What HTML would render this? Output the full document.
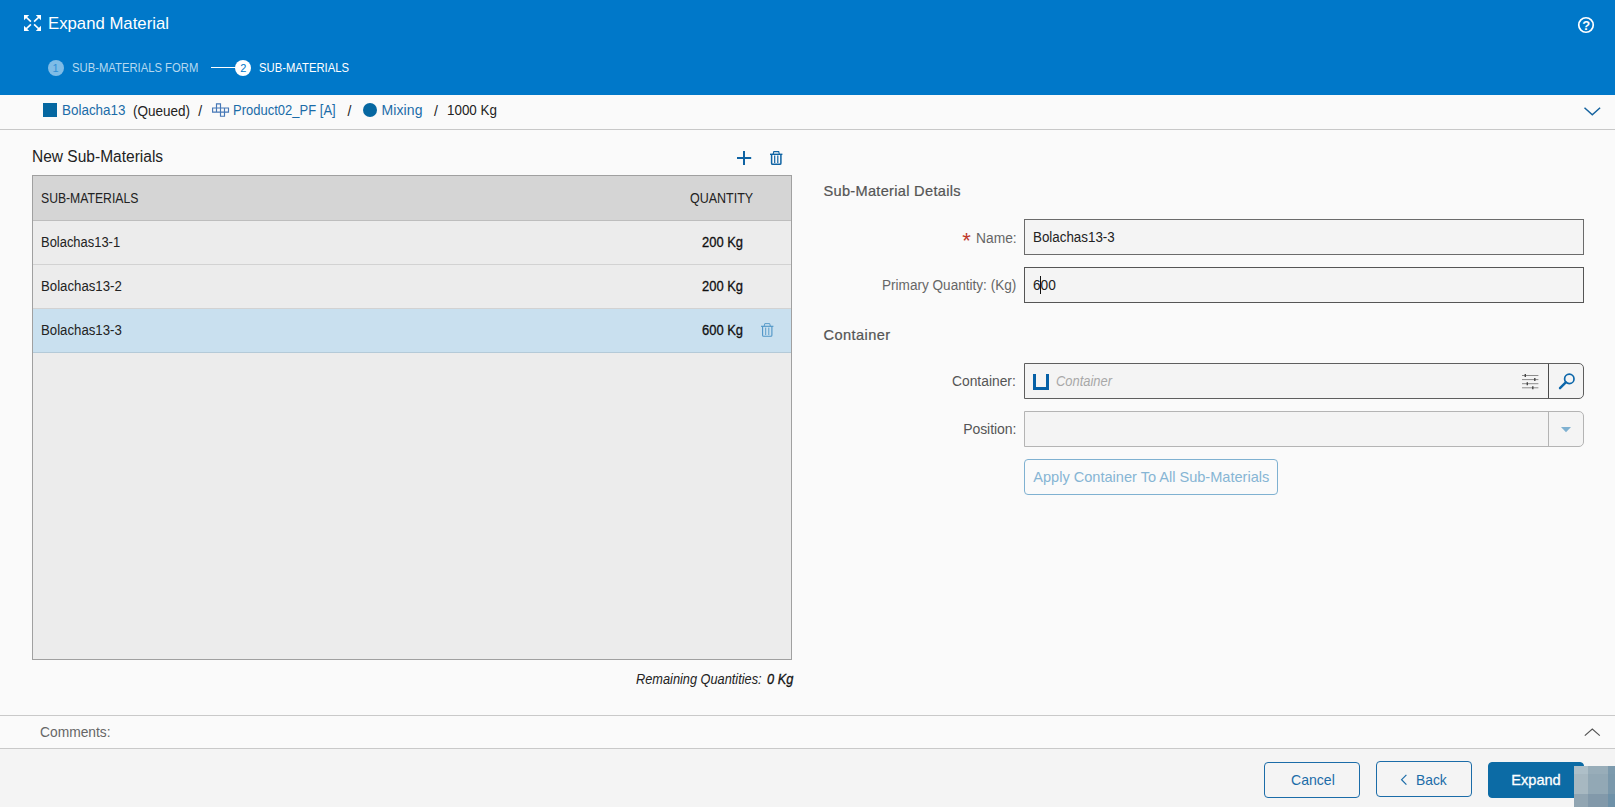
<!DOCTYPE html>
<html lang="en">
<head>
<meta charset="utf-8">
<title>Expand Material</title>
<style>
html,body{margin:0;padding:0;}
body{width:1615px;height:807px;overflow:hidden;position:relative;background:#fafafa;font-family:"Liberation Sans",sans-serif;}
.t{position:absolute;transform-origin:0 0;line-height:20px;white-space:nowrap;margin:0;padding:0;font-weight:400;}
.abs,svg{position:absolute;}
svg{overflow:visible;}
.hdr{position:absolute;left:0;top:0;width:1615px;height:95px;background:#0078c9;}
.crumb{position:absolute;left:0;top:95px;width:1615px;height:34px;background:#fafafa;border-bottom:1px solid #c8c8c8;}
.stepc{position:absolute;width:16px;height:16px;border-radius:50%;top:60px;}
.grid{position:absolute;left:32px;top:175px;width:758px;height:483px;border:1px solid #a0a0a0;background:#ececec;}
.gh{position:absolute;left:0;top:0;width:758px;height:44px;background:#d5d5d5;border-bottom:1px solid #bdbdbd;}
.gr{position:absolute;left:0;width:758px;height:43px;border-bottom:1px solid #d2d2d2;}
.gr.sel{background:#c9e0ef;border-bottom-color:#b4cad8;}
.inp{position:absolute;left:1024px;width:558px;height:34px;border:1px solid #6b6b6b;background:#f4f4f4;}
.btn{position:absolute;box-sizing:border-box;border:1px solid #1b6ca8;border-radius:4px;background:#f4f4f4;}
.foot{position:absolute;left:0;top:749px;width:1615px;height:58px;background:#f4f4f4;}
.ln{position:absolute;left:0;width:1615px;height:1px;background:#c9c9c9;}
.px{position:absolute;}
</style>
</head>
<body>
<header class="hdr">
<svg style="left:24px;top:15px" width="17" height="16" viewBox="0 0 17 16"><path d="M0 0H5.2L0 5.2ZM17 0H11.8L17 5.2ZM0 16H5.2L0 10.8ZM17 16H11.8L17 10.8Z" fill="#fff"/><path d="M1.5 1.5L6.9 6.7M15.5 1.5L10.1 6.7M1.5 14.5L6.9 9.3M15.5 14.5L10.1 9.3" stroke="#fff" stroke-width="1.7" fill="none"/></svg>
<h1 class="t" style="left:47.84px;top:14.00px;font-size:17px;color:#fff;transform:scaleX(0.9847);">Expand Material</h1>
<div class="stepc" style="left:48px;background:#7fbce6"></div>
<span class="t" style="left:52.61px;top:58.00px;font-size:11px;color:#2f8fd6;">1</span>
<span class="t" style="left:71.62px;top:58.00px;font-size:12.8px;color:#b5d8f0;transform:scaleX(0.8807);">SUB-MATERIALS FORM</span>
<div class="abs" style="left:211px;top:67px;width:25px;height:1px;background:#fff"></div>
<div class="stepc" style="left:235px;background:#fff"></div>
<span class="t" style="left:240.32px;top:58.00px;font-size:11px;color:#0078c8;">2</span>
<span class="t" style="left:259.23px;top:58.00px;font-size:12.8px;color:#fff;transform:scaleX(0.8807);">SUB-MATERIALS</span>
<svg style="left:1577.2px;top:16.1px" width="18" height="18" viewBox="0 0 18 18" fill="none" stroke="#fff" stroke-width="1.7"><circle cx="9" cy="9" r="7.25"/></svg>
<span class="t" style="left:1582.14px;top:16.00px;font-size:13px;color:#fff;font-weight:700;">?</span>
</header>
<nav class="crumb"></nav>
<div class="abs" style="left:43px;top:103px;width:14px;height:14px;background:#0567a1"></div>
<span class="t" style="left:62.14px;top:100.00px;font-size:14px;color:#1b6ca8;transform:scaleX(0.9599);">Bolacha13</span>
<span class="t" style="left:132.94px;top:101.00px;font-size:14px;color:#222;transform:scaleX(0.9647);">(Queued)</span>
<span class="t" style="left:198.27px;top:101.00px;font-size:14px;color:#222;">/</span>
<svg style="left:212px;top:103px" width="17" height="14" viewBox="0 0 17 14" fill="none" stroke="#4577b6" stroke-width="1.15"><path d="M0.6 5H16.5V9.1H0.6ZM4.5 9.1V0.9H8.5V13.2H12.5V5"/></svg>
<span class="t" style="left:232.97px;top:100.00px;font-size:14px;color:#1b6ca8;transform:scaleX(0.9291);">Product02_PF [A]</span>
<span class="t" style="left:347.42px;top:101.00px;font-size:14px;color:#222;">/</span>
<div class="abs" style="left:363px;top:103px;width:14px;height:14px;border-radius:50%;background:#0567a1"></div>
<span class="t" style="left:381.53px;top:100.00px;font-size:14px;color:#1b6ca8;letter-spacing:0.096px;">Mixing</span>
<span class="t" style="left:434.11px;top:101.00px;font-size:14px;color:#222;">/</span>
<span class="t" style="left:446.98px;top:100.00px;font-size:14px;color:#222;transform:scaleX(0.9575);">1000 Kg</span>
<svg style="left:1584px;top:107px" width="17" height="9" viewBox="0 0 17 9" fill="none" stroke="#15639f" stroke-width="1.5"><path d="M0.5 0.7L8.3 7.7L16.1 0.7"/></svg>

<h2 class="t" style="left:32.10px;top:147.00px;font-size:16px;color:#222;transform:scaleX(0.9701);">New Sub-Materials</h2>
<svg style="left:737px;top:151px" width="14" height="14" viewBox="0 0 14 14" fill="none" stroke="#0f63a3" stroke-width="2"><path d="M7 0V14M0 7H14.2"/></svg>
<svg style="left:770px;top:151px" width="13" height="14" viewBox="0 0 13 14" fill="none" stroke="#0f63a3"><path d="M0 3.3H12.4" stroke-width="1.4"/><path d="M3.1 3.3L3.8 0.6H8.7L9.4 3.3" stroke-width="1.1"/><path d="M1.6 3.3V12.2Q1.6 13.3 2.7 13.3H9.8Q10.9 13.3 10.9 12.2V3.3" stroke-width="1.5"/><path d="M4.7 4.6V12M7.8 4.6V12" stroke-width="1.2"/></svg>
<div class="grid">
<div class="gh"></div>
<div class="gr" style="top:45px"></div>
<div class="gr" style="top:89px"></div>
<div class="gr sel" style="top:133px"></div>
</div>
<span class="t" style="left:40.97px;top:188.00px;font-size:14px;color:#222;transform:scaleX(0.8707);">SUB-MATERIALS</span>
<span class="t" style="left:689.88px;top:188.00px;font-size:14px;color:#222;transform:scaleX(0.8930);">QUANTITY</span>
<span class="t" style="left:40.55px;top:232.00px;font-size:14px;color:#222;transform:scaleX(0.9237);">Bolachas13-1</span>
<span class="t" style="left:701.97px;top:232.00px;font-size:14px;color:#111;transform:scaleX(0.9239);-webkit-text-stroke:0.3px #111;">200 Kg</span>
<span class="t" style="left:40.67px;top:276.00px;font-size:14px;color:#222;transform:scaleX(0.9438);">Bolachas13-2</span>
<span class="t" style="left:701.97px;top:276.00px;font-size:14px;color:#111;transform:scaleX(0.9239);-webkit-text-stroke:0.3px #111;">200 Kg</span>
<span class="t" style="left:40.64px;top:320.00px;font-size:14px;color:#222;transform:scaleX(0.9434);">Bolachas13-3</span>
<span class="t" style="left:702.39px;top:320.00px;font-size:14px;color:#111;transform:scaleX(0.9241);-webkit-text-stroke:0.3px #111;">600 Kg</span>
<svg style="left:761px;top:323px" width="13" height="14" viewBox="0 0 13 14" fill="none" stroke="#4f95c6"><path d="M0 3.3H12.4" stroke-width="1.1"/><path d="M3.1 3.3L3.8 0.6H8.7L9.4 3.3" stroke-width="0.9"/><path d="M1.6 3.3V12.2Q1.6 13.3 2.7 13.3H9.8Q10.9 13.3 10.9 12.2V3.3" stroke-width="1.1"/><path d="M4.7 4.6V12M7.8 4.6V12" stroke-width="0.9"/></svg>
<span class="t" style="left:636.35px;top:669.00px;font-size:14px;color:#222;font-style:italic;transform:scaleX(0.9119);">Remaining Quantities:</span>
<span class="t" style="left:766.87px;top:669.00px;font-size:14px;color:#111;font-style:italic;transform:scaleX(0.9107);-webkit-text-stroke:0.3px #111;">0 Kg</span>

<h3 class="t" style="left:823.45px;top:181.00px;font-size:14.6px;color:#555;letter-spacing:0.300px;-webkit-text-stroke:0.22px #555;">Sub-Material Details</h3>
<span class="t" style="left:962.18px;top:231.00px;font-size:22px;color:#c0392b;">*</span>
<label class="t" style="left:975.81px;top:228.00px;font-size:14px;color:#666;transform:scaleX(0.9865);">Name:</label>
<div class="inp" style="top:219px"></div>
<span class="t" style="left:1032.67px;top:227.00px;font-size:14px;color:#222;transform:scaleX(0.9548);">Bolachas13-3</span>
<label class="t" style="left:882.47px;top:275.00px;font-size:14px;color:#666;transform:scaleX(0.9697);">Primary Quantity: (Kg)</label>
<div class="inp" style="top:267px;border-color:#555"></div>
<span class="t" style="left:1032.89px;top:275.00px;font-size:14px;color:#222;transform:scaleX(0.9787);">600</span>
<div class="abs" style="left:1040px;top:276px;width:1px;height:18px;background:#111"></div>
<h3 class="t" style="left:823.57px;top:325.00px;font-size:14.6px;color:#555;letter-spacing:0.406px;-webkit-text-stroke:0.22px #555;">Container</h3>
<label class="t" style="left:952.26px;top:371.00px;font-size:14px;color:#555;transform:scaleX(0.9872);">Container:</label>
<div class="inp" style="top:363px;border-color:#5e5e5e;border-radius:0 5px 5px 0"></div>
<div class="abs" style="left:1548px;top:364px;width:1px;height:34px;background:#4a4a4a"></div>
<svg style="left:1033px;top:374px" width="16" height="16" viewBox="0 0 16 16"><path d="M0 0H3V13H13V0H16V16H0Z" fill="#0560a6"/></svg>
<span class="t" style="left:1056.20px;top:371.00px;font-size:14px;color:#a8a8a8;font-style:italic;transform:scaleX(0.9235);">Container</span>
<svg style="left:1522px;top:374px" width="17" height="16" viewBox="0 0 17 16" fill="none"><path d="M0 1.5H16.4M0 5.6H16.4M0 9.7H16.4M0 13.8H16.4" stroke="#8c8c8c" stroke-width="1"/><path d="M3.3 0V3M12.8 4.1V7.1M5.3 8.2V11.2M10.8 12.3V15.3" stroke="#444" stroke-width="1.4"/></svg>
<svg style="left:1558px;top:372px" width="19" height="19" viewBox="0 0 19 19" fill="none" stroke="#0d67aa" stroke-linecap="round"><circle cx="11.3" cy="6.9" r="4.7" stroke-width="1.7"/><path d="M7.8 10.4L2 16.2" stroke-width="2.4"/></svg>
<label class="t" style="left:963.22px;top:419.00px;font-size:14px;color:#555;letter-spacing:-0.081px;">Position:</label>
<div class="inp" style="top:411px;border-color:#b4b4b4;border-radius:0 5px 5px 0"></div>
<div class="abs" style="left:1548px;top:412px;width:1px;height:34px;background:#b4b4b4"></div>
<svg style="left:1561px;top:427px" width="10" height="6" viewBox="0 0 10 6"><path d="M0 0H10L5 5.2Z" fill="#7fb1d1"/></svg>
<div class="btn" style="left:1024px;top:459px;width:254px;height:36px;border-color:#7fb1d1;background:#fafafa"></div>
<span class="t" style="left:1033.30px;top:467.00px;font-size:14.6px;color:#86b5d4;letter-spacing:-0.018px;">Apply Container To All Sub-Materials</span>

<div class="ln" style="top:715px"></div>
<span class="t" style="left:40.05px;top:722.00px;font-size:14px;color:#666;transform:scaleX(0.9858);">Comments:</span>
<svg style="left:1584px;top:728px" width="17" height="9" viewBox="0 0 17 9" fill="none" stroke="#555" stroke-width="1.2"><path d="M0.8 7.6L8.3 1L15.8 7.6"/></svg>
<div class="ln" style="top:748px"></div>
<footer class="foot"></footer>
<div class="btn" style="left:1264px;top:762px;width:96px;height:36px"></div>
<span class="t" style="left:1290.52px;top:770.00px;font-size:14.6px;color:#1b6ca8;transform:scaleX(0.9643);">Cancel</span>
<div class="btn" style="left:1376px;top:761px;width:96px;height:36px"></div>
<svg style="left:1400px;top:774px" width="7" height="12" viewBox="0 0 7 12" fill="none" stroke="#1b6ca8" stroke-width="1.2"><path d="M6.4 0.8L1.6 5.7L6.4 10.6"/></svg>
<span class="t" style="left:1415.74px;top:770.00px;font-size:14.6px;color:#1b6ca8;transform:scaleX(0.9481);">Back</span>
<div class="btn" style="left:1488px;top:762px;width:96px;height:36px;background:#0c6ba5;border-color:#0c6ba5"></div>
<span class="t" style="left:1511.32px;top:770.00px;font-size:14.6px;color:#fff;letter-spacing:-0.027px;-webkit-text-stroke:0.3px #fff;">Expand</span>
<div class="px" style="left:1574px;top:766px;width:14px;height:8px;background:#aebfc8"></div>
<div class="px" style="left:1588px;top:766px;width:20px;height:8px;background:#98adb9"></div>
<div class="px" style="left:1608px;top:766px;width:7px;height:8px;background:#7c9aad"></div>
<div class="px" style="left:1574px;top:774px;width:14px;height:20px;background:#a7b8c1"></div>
<div class="px" style="left:1588px;top:774px;width:20px;height:20px;background:#92a8b5"></div>
<div class="px" style="left:1608px;top:774px;width:7px;height:20px;background:#7a98ab"></div>
<div class="px" style="left:1574px;top:794px;width:14px;height:13px;background:#91a5b2"></div>
<div class="px" style="left:1588px;top:794px;width:20px;height:13px;background:#8299aa"></div>
<div class="px" style="left:1608px;top:794px;width:7px;height:13px;background:#6e91a8"></div>
</body>
</html>
